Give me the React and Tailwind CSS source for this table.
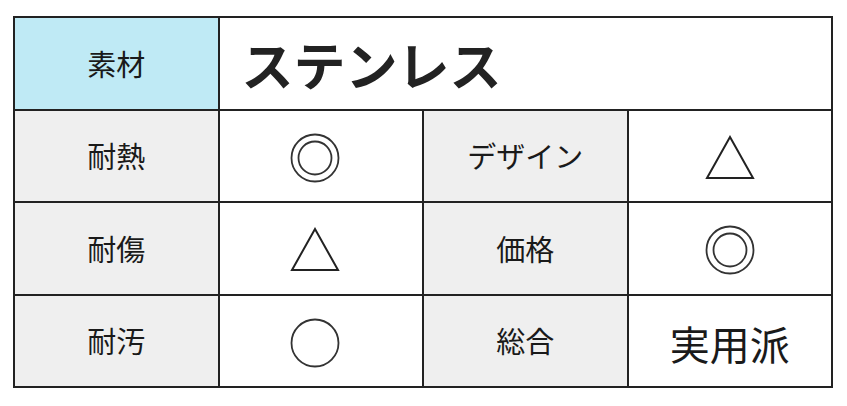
const font = { fontFamily: '"Noto Sans CJK JP", "Noto Sans", sans-serif' };

function DoubleCircle() {
  return (
    <svg width="52" height="52" viewBox="0 0 52 52">
      <circle cx="26" cy="26" r="23.5" fill="none" stroke="#333" strokeWidth="1.8" />
      <circle cx="26" cy="26" r="16.5" fill="none" stroke="#333" strokeWidth="1.8" />
    </svg>
  );
}

function Circle() {
  return (
    <svg width="52" height="52" viewBox="0 0 52 52">
      <circle cx="26" cy="26" r="23.5" fill="none" stroke="#333" strokeWidth="1.8" />
    </svg>
  );
}

function Triangle() {
  return (
    <svg width="50" height="46" viewBox="0 0 50 46">
      <polygon points="25,2 48,43 2,43" fill="none" stroke="#222" strokeWidth="2" strokeLinejoin="miter" />
    </svg>
  );
}

function Label({ children }) {
  return (
    <div className="flex items-center justify-center bg-[#efefef] border-r-2 border-b-2 border-[#222] text-[29px] text-[#1a1a1a]">
      {children}
    </div>
  );
}

// the middle column's marks sit a little left of centre in the original
function Value({ children, left }) {
  return (
    <div
      className={
        left
          ? "flex items-center justify-center pr-[12px] pt-[3px] bg-white border-r-2 border-b-2 border-[#222] text-[40px] text-[#1a1a1a]"
          : "flex items-center justify-center pt-[3px] bg-white border-r-2 border-b-2 border-[#222] text-[40px] text-[#1a1a1a]"
      }
    >
      {children}
    </div>
  );
}

export default function App() {
  return (
    <div className="w-[847px] h-[406px] bg-white pt-[16px] pl-[13px]" style={font}>
      <div className="w-[820px] grid grid-cols-4 grid-rows-[93px_92px_93px_92px] border-l-2 border-t-2 border-[#222]">
        <div className="flex items-center justify-center bg-[#bfeaf5] border-r-2 border-b-2 border-[#222] text-[29px] text-[#1a1a1a]">
          素材
        </div>
        <div className="col-span-3 flex items-center pl-[22px] bg-white border-r-2 border-b-2 border-[#222] text-[52px] font-bold text-[#222] leading-none">
          ステンレス
        </div>

        <Label>耐熱</Label>
        <Value left><DoubleCircle /></Value>
        <Label>デザイン</Label>
        <Value><Triangle /></Value>

        <Label>耐傷</Label>
        <Value left><Triangle /></Value>
        <Label>価格</Label>
        <Value><DoubleCircle /></Value>

        <Label>耐汚</Label>
        <Value left><Circle /></Value>
        <Label>総合</Label>
        <Value>実用派</Value>
      </div>
    </div>
  );
}
